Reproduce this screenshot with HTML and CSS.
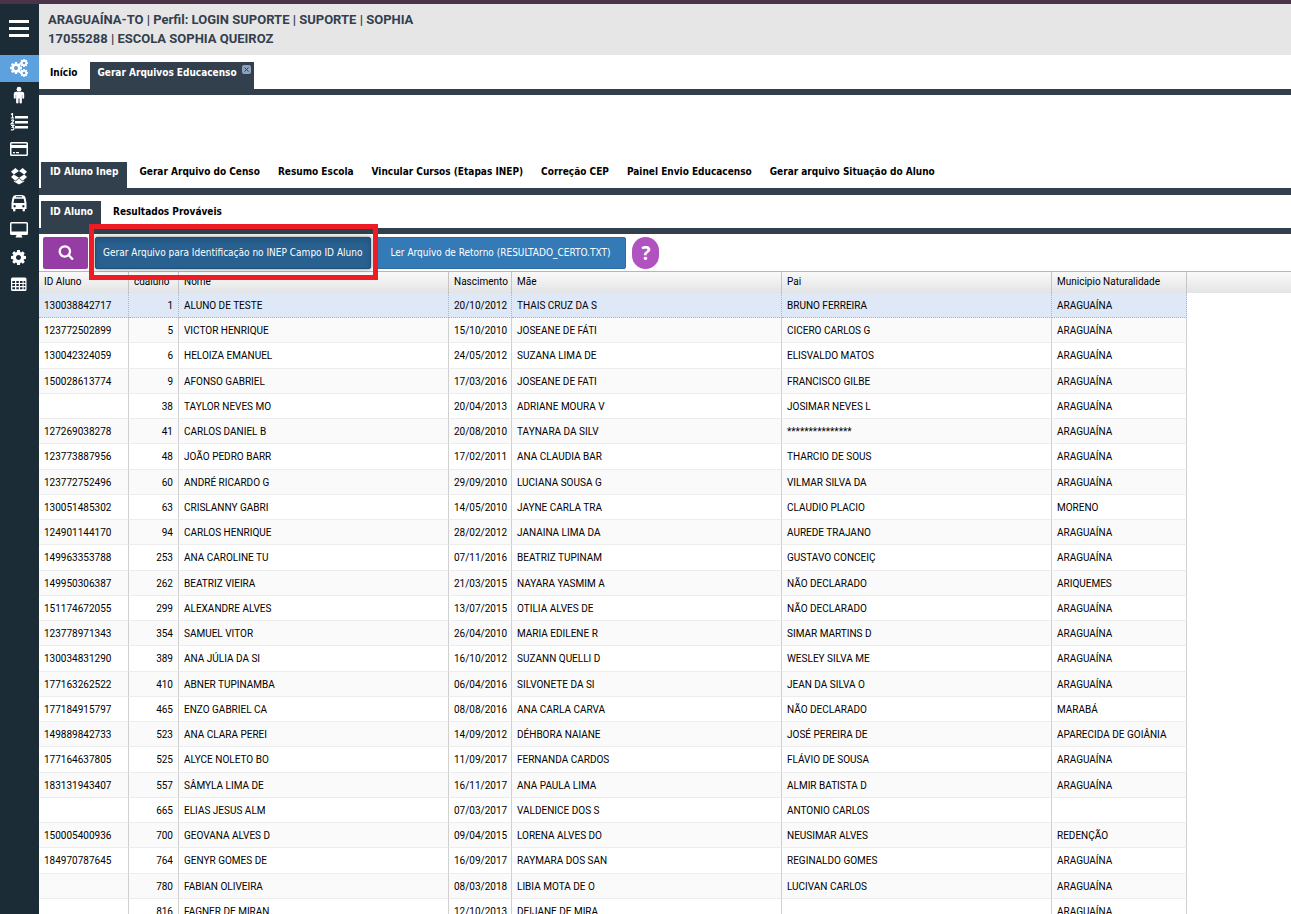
FILE: index.html
```html
<!DOCTYPE html>
<html lang="pt-BR">
<head>
<meta charset="utf-8">
<title>Gerar Arquivos Educacenso</title>
<link rel="stylesheet" href="styles.css">
</head>
<body>
<svg class="defs" aria-hidden="true">
<symbol id="cog" viewBox="128 128 1536 1536"><path d="M1152 896q0-106-75-181t-181-75-181 75-75 181 75 181 181 75 181-75 75-181zm512-109v222q0 12-8 23t-20 13l-185 28q-19 54-39 91 35 50 107 138 10 12 10 25t-9 23q-27 37-99 108t-94 71q-12 0-26-9l-138-108q-44 23-91 38-16 136-29 186-7 28-36 28h-222q-14 0-24.500-8.500t-11.500-21.500l-28-184q-49-16-90-37l-141 107q-10 9-25 9-14 0-25-11-126-114-165-168-7-10-7-23 0-12 8-23 15-21 51-66.500t54-70.500q-27-50-41-99l-183-27q-13-2-21-12.500t-8-23.500v-222q0-12 8-23t19-13l186-28q14-46 39-92-40-57-107-138-10-12-10-24 0-10 9-23 26-36 98.500-107.500t94.500-71.500q13 0 26 10l138 107q44-23 91-38 16-136 29-186 7-28 36-28h222q14 0 24.500 8.500t11.500 21.500l28 184q49 16 90 37l142-107q9-9 24-9 13 0 25 10 129 119 165 170 7 8 7 22 0 12-8 23-15 21-51 66.500t-54 70.500q26 50 41 98l183 28q13 2 21 12.500t8 23.500z"/></symbol>
</svg>
<div class="app">
<nav class="sidebar" aria-label="Menu principal">
<button class="menu" aria-label="Menu"><svg width="20" height="20" viewBox="0 0 20 20"><path d="M0 1h20v3H0zM0 8h20v3H0zM0 15h20v3H0z"/></svg></button>
<a class="item current" href="#" aria-label="Configurações"><svg width="18" height="18" viewBox="0 0 18 18"><use href="#cog" x="0" y="3" width="12" height="12"/><use href="#cog" x="10" y="0" width="8" height="8"/><use href="#cog" x="10" y="10" width="8" height="8"/></svg></a>
<a class="item" href="#" aria-label="Pessoas"><svg width="18" height="18" viewBox="0 0 18 18"><circle cx="9" cy="3.200" r="2.400"/><path d="M6 5.800h6q2.200 0 2.200 2v4q0 1-1 1t-1-1V8.800h-.3V16.500q0 1-1.200 1t-1.200-1V12.500h-1v4q0 1-1.200 1t-1.200-1V8.800h-.3v3q0 1-1 1t-1-1v-4q0-2 2.200-2z"/></svg></a>
<a class="item" href="#" aria-label="Listas"><svg width="18" height="18" viewBox="0 0 18 18"><path d="M5 3h13v2.500H5zM5 8h13v2.500H5zM5 13h13v2.500H5z"/><path class="line" d="M1 1.500l1.500-1v4.500M.8 5h3.400M1.200 7.500q2.700-1.400 2.400.5L1.200 10.800h3M1 12.500h2.800l-1.500 1.700q1.900.2 1.600 1.700-.8 1.600-3 .7"/></svg></a>
<a class="item" href="#" aria-label="Cartões"><svg width="18" height="18" viewBox="0 0 18 18"><path fill-rule="evenodd" d="M1.500 2h15Q18 2 18 3.500v11q0 1.500-1.500 1.500h-15Q0 16 0 14.500v-11Q0 2 1.500 2zm0 1.500V5h15V3.500zm0 4.500v6.500h15V8zM3 12h2v1.300H3zm3 0h3v1.300H6z"/></svg></a>
<a class="item" href="#" aria-label="Módulos"><svg width="18" height="18" viewBox="0 0 18 18"><path d="M5.300 1L9 4.100 3.800 7.400 1 4.800zM12.700 1L17 4.800l-2.800 2.600L9 4.100zM1 9.900l2.800-2.500L9 10.700l-3.700 3zM14.200 7.400l2.800 2.500-4.300 3.800-3.700-3zM9 11.400l3.700 3 1.500-1v1.100L9 17.500l-5.200-3v-1.100l1.500 1z"/></svg></a>
<a class="item" href="#" aria-label="Transporte"><svg width="18" height="18" viewBox="0 0 18 18"><path fill-rule="evenodd" d="M6 1h6q3 .3 3.500 2.500L16.500 9v6H15v1.300q0 1.200-1.200 1.200t-1.300-1.200V15h-7v1.300q0 1.200-1.300 1.200T3 16.300V15H1.500V9l1-5.500Q3 1.300 6 1zm0 1.300v1h6v-1zM4.300 4.800L3.500 9h11L13.700 4.800zM4.600 11a1.200 1.200 0 1 0 .1 0zm8.700 0a1.200 1.200 0 1 0 .1 0z"/></svg></a>
<a class="item" href="#" aria-label="Monitor"><svg width="18" height="18" viewBox="0 0 18 18"><path fill-rule="evenodd" d="M1.500 1h15Q18 1 18 2.500v10q0 1.500-1.500 1.500h-5q0 1 .8 1.500v1H5.700v-1q.8-.5.8-1.500h-5Q0 14 0 12.500v-10Q0 1 1.500 1zm0 1.500v8h15v-8z"/></svg></a>
<a class="item" href="#" aria-label="Ajustes"><svg width="15" height="15"><use href="#cog" width="15" height="15"/></svg></a>
<a class="item" href="#" aria-label="Tabelas"><svg width="18" height="18" viewBox="0 0 18 18"><path fill-rule="evenodd" d="M2.500 2.500h12.500q1.500 0 1.500 1.500v10.500q0 1.500-1.500 1.500h-12.500Q1 16 1 14.500v-10.500Q1 2.500 2.500 2.500zM2.300 6v2H5V6zM6.300 6v2h2.500V6zm3.700 0v2h2.500V6zM13.600 6v2h1.700V6zM2.300 9v2H5V9zm4 0v2h2.500V9zm3.700 0v2h2.500V9zm3.600 0v2h1.700V9zM2.300 12.300v2H5v-2zm4 0v2h2.500v-2zm3.700 0v2h2.500v-2zm3.600 0v2h1.700v-2z"/></svg></a>
</nav>
<main class="main">
<header class="top"><div>ARAGUAÍNA-TO | Perfil: LOGIN SUPORTE | SUPORTE | SOPHIA</div><div>17055288 | ESCOLA SOPHIA QUEIROZ</div></header>
<div class="tabs pages" role="tablist">
<button class="tab" role="tab">Início</button>
<div class="active closable"><button class="tabname" role="tab" aria-selected="true">Gerar Arquivos Educacenso</button><button class="close" aria-label="Fechar"><svg width="9" height="9" viewBox="0 0 9 9"><rect width="9" height="9" rx="2"/><path d="M2.500 2.500l4 4m0-4l-4 4"/></svg></button></div>
</div>
<div class="tabs sections" role="tablist">
<button class="tab active" role="tab" aria-selected="true">ID Aluno Inep</button>
<button class="tab" role="tab">Gerar Arquivo do Censo</button>
<button class="tab" role="tab">Resumo Escola</button>
<button class="tab" role="tab">Vincular Cursos (Etapas INEP)</button>
<button class="tab" role="tab">Correção CEP</button>
<button class="tab" role="tab">Painel Envio Educacenso</button>
<button class="tab" role="tab">Gerar arquivo Situação do Aluno</button>
</div>
<div class="tabs views" role="tablist">
<button class="tab active" role="tab" aria-selected="true">ID Aluno</button>
<button class="tab" role="tab">Resultados Prováveis</button>
</div>
<div class="toolbar">
<button class="btn search" aria-label="Pesquisar"><svg width="16" height="16" viewBox="0 0 1792 1792"><path d="M1216 832q0-185-131.500-316.500t-316.500-131.500-316.500 131.500-131.500 316.500 131.500 316.500 316.500 131.500 316.500-131.500 131.500-316.500zm512 832q0 52-38 90t-90 38q-54 0-90-38l-343-342q-179 124-399 124-143 0-273.500-55.500t-225-150-150-225-55.500-273.500 55.500-273.500 150-225 225-150 273.500-55.500 273.500 55.500 225 150 150 225 55.500 273.500q0 220-124 399l343 343q37 37 37 90z"/></svg></button>
<div class="marked"><button class="btn generate">Gerar Arquivo para Identificação no INEP Campo ID Aluno</button></div>
<button class="btn read">Ler Arquivo de Retorno (RESULTADO_CERTO.TXT)</button>
<button class="help" aria-label="Ajuda">?</button>
</div>
<table class="grid">
<colgroup><col class="w-id"><col class="w-cd"><col class="w-name"><col class="w-date"><col class="w-name"><col class="w-name"><col class="w-city"><col></colgroup>
<thead><tr><th>ID Aluno</th><th>cdaluno</th><th>Nome</th><th>Nascimento</th><th>Mãe</th><th>Pai</th><th>Municipio Naturalidade</th><th></th></tr></thead>
<tbody>
<tr class="selected"><td>130038842717<td>1<td>ALUNO DE TESTE<td>20/10/2012<td>THAIS CRUZ DA S<td>BRUNO FERREIRA<td>ARAGUAÍNA
<tr><td>123772502899<td>5<td>VICTOR HENRIQUE<td>15/10/2010<td>JOSEANE DE FÁTI<td>CICERO CARLOS G<td>ARAGUAÍNA
<tr><td>130042324059<td>6<td>HELOIZA EMANUEL<td>24/05/2012<td>SUZANA LIMA DE<td>ELISVALDO MATOS<td>ARAGUAÍNA
<tr><td>150028613774<td>9<td>AFONSO GABRIEL<td>17/03/2016<td>JOSEANE DE FATI<td>FRANCISCO GILBE<td>ARAGUAÍNA
<tr><td><td>38<td>TAYLOR NEVES MO<td>20/04/2013<td>ADRIANE MOURA V<td>JOSIMAR NEVES L<td>ARAGUAÍNA
<tr><td>127269038278<td>41<td>CARLOS DANIEL B<td>20/08/2010<td>TAYNARA DA SILV<td>***************<td>ARAGUAÍNA
<tr><td>123773887956<td>48<td>JOÃO PEDRO BARR<td>17/02/2011<td>ANA CLAUDIA BAR<td>THARCIO DE SOUS<td>ARAGUAÍNA
<tr><td>123772752496<td>60<td>ANDRÉ RICARDO G<td>29/09/2010<td>LUCIANA SOUSA G<td>VILMAR SILVA DA<td>ARAGUAÍNA
<tr><td>130051485302<td>63<td>CRISLANNY GABRI<td>14/05/2010<td>JAYNE CARLA TRA<td>CLAUDIO PLACIO<td>MORENO
<tr><td>124901144170<td>94<td>CARLOS HENRIQUE<td>28/02/2012<td>JANAINA LIMA DA<td>AUREDE TRAJANO<td>ARAGUAÍNA
<tr><td>149963353788<td>253<td>ANA CAROLINE TU<td>07/11/2016<td>BEATRIZ TUPINAM<td>GUSTAVO CONCEIÇ<td>ARAGUAÍNA
<tr><td>149950306387<td>262<td>BEATRIZ VIEIRA<td>21/03/2015<td>NAYARA YASMIM A<td>NÃO DECLARADO<td>ARIQUEMES
<tr><td>151174672055<td>299<td>ALEXANDRE ALVES<td>13/07/2015<td>OTILIA ALVES DE<td>NÃO DECLARADO<td>ARAGUAÍNA
<tr><td>123778971343<td>354<td>SAMUEL VITOR<td>26/04/2010<td>MARIA EDILENE R<td>SIMAR MARTINS D<td>ARAGUAÍNA
<tr><td>130034831290<td>389<td>ANA JÚLIA DA SI<td>16/10/2012<td>SUZANN QUELLI D<td>WESLEY SILVA ME<td>ARAGUAÍNA
<tr><td>177163262522<td>410<td>ABNER TUPINAMBA<td>06/04/2016<td>SILVONETE DA SI<td>JEAN DA SILVA O<td>ARAGUAÍNA
<tr><td>177184915797<td>465<td>ENZO GABRIEL CA<td>08/08/2016<td>ANA CARLA CARVA<td>NÃO DECLARADO<td>MARABÁ
<tr><td>149889842733<td>523<td>ANA CLARA PEREI<td>14/09/2012<td>DÉHBORA NAIANE<td>JOSÉ PEREIRA DE<td>APARECIDA DE GOIÂNIA
<tr><td>177164637805<td>525<td>ALYCE NOLETO BO<td>11/09/2017<td>FERNANDA CARDOS<td>FLÁVIO DE SOUSA<td>ARAGUAÍNA
<tr><td>183131943407<td>557<td>SÂMYLA LIMA DE<td>16/11/2017<td>ANA PAULA LIMA<td>ALMIR BATISTA D<td>ARAGUAÍNA
<tr><td><td>665<td>ELIAS JESUS ALM<td>07/03/2017<td>VALDENICE DOS S<td>ANTONIO CARLOS<td>
<tr><td>150005400936<td>700<td>GEOVANA ALVES D<td>09/04/2015<td>LORENA ALVES DO<td>NEUSIMAR ALVES<td>REDENÇÃO
<tr><td>184970787645<td>764<td>GENYR GOMES DE<td>16/09/2017<td>RAYMARA DOS SAN<td>REGINALDO GOMES<td>ARAGUAÍNA
<tr><td><td>780<td>FABIAN OLIVEIRA<td>08/03/2018<td>LIBIA MOTA DE O<td>LUCIVAN CARLOS<td>ARAGUAÍNA
<tr><td><td>816<td>FAGNER DE MIRAN<td>12/10/2013<td>DEIJANE DE MIRA<td><td>ARAGUAÍNA
</tbody>
</table>
</main>
</div>
</body>
</html>
```

FILE: styles.css
```css
* { box-sizing: border-box; }
body {
  margin: 0;
  height: 100vh;
  overflow: hidden;
  background: #fff;
  color: #000;
  font-family: "DejaVu Sans Condensed", "DejaVu Sans", Tahoma, sans-serif;
  font-size: 10px;
}
button { font: inherit; border: 0; margin: 0; padding: 0; background: none; color: inherit; white-space: nowrap; }
.defs { position: absolute; width: 0; height: 0; }
.app { display: flex; height: 100%; border-top: 4px solid #4b3447; }

.sidebar { flex: none; display: flex; flex-direction: column; width: 39px; background: #1c2c37; fill: #fff; }
.menu { display: grid; place-items: center; height: 51px; padding: 0 1px 1px 0; }
.item { display: grid; place-items: center; height: 27px; padding: 0 2px 1px 0; }
.current { background: #5ea1df; }
.line { fill: none; stroke: #fff; stroke-width: 1.2; }

.main { flex: 1; min-width: 0; }
.top { height: 51px; padding: 6px 9px; background: #e6e6e6; color: #323f4e; font: bold 13px/19px Roboto, "Noto Sans", sans-serif; }

.tabs { display: flex; align-items: stretch; gap: 2px; padding-left: 2px; border-bottom: 6px solid #323f4d; font-weight: bold; }
.tab { padding: 0 8px 6px; }
.active { background: #323f4d; color: #fff; }
.tab.active { margin-right: 2px; padding: 0 9px 6px; }
.pages { height: 40px; padding: 7px 0 0 3px; gap: 5px; }
.closable { display: flex; padding: 0 3px 0 7px; gap: 5px; }
.tabname { padding-bottom: 6px; }
.close { align-self: flex-start; padding-top: 3px; line-height: 0; }
.close rect { fill: #8ea2bf; }
.close path { stroke: #323f4d; stroke-width: 1; }
.sections { height: 100px; padding-top: 67px; border-bottom-width: 7px; }
.sections .tab { padding-bottom: 8px; }
.views { height: 39px; padding-top: 6px; }
.views .tab.active { padding-right: 8px; }

.toolbar { display: flex; align-items: center; height: 37px; padding: 0 4px; }
.btn { height: 32px; border-radius: 2px; color: #fff; }
.search { width: 45px; margin-right: 7px; background: #963da5; fill: #fff; }
.marked { position: relative; margin-right: 4px; }
.marked::after { content: ""; position: absolute; inset: -13px -7px -11px -6px; border: 5px solid #ed1c24; pointer-events: none; }
.generate { padding: 0 8px 0 7px; border: 1px solid #204d74; background: #286090; box-shadow: inset 0 3px 5px rgba(0, 0, 0, .125), 0 0 4px rgba(0, 0, 0, .5); }
.read { padding: 0 15px 0 14px; border: 1px solid #2e6da4; background: #337ab7; margin-right: 6px; }
.help { width: 27px; height: 32px; border-radius: 14px; background: #b052c0; color: #fff; font: bold 19px "Open Sans", sans-serif; }

.grid { width: 100%; table-layout: fixed; border-collapse: separate; border-spacing: 0; font-family: Roboto, "Noto Sans", sans-serif; }
.w-id { width: 90px; }
.w-cd { width: 50px; }
.w-name { width: 270px; }
.w-date { width: 63px; }
.w-city { width: 135px; }
.grid th, .grid td { padding: 0 5px; text-align: left; white-space: nowrap; }
.grid th { height: 22px; padding-bottom: 2px; font-weight: normal; border-top: 1px solid #99bbe8; border-right: 1px solid #c5c5c5; background: linear-gradient(#f9f9f9, #e3e4e6); }
.grid th:last-child { border-right: 0; }
.grid td { height: 25px; border-right: 1px solid #d0d0d0; border-bottom: 1px solid #ededed; }
.grid tbody tr:nth-child(4n+3) td { height: 26px; }
.grid tbody tr:nth-child(even) td { background: #fafafa; }
.grid td:nth-child(2) { text-align: right; }
.grid .selected td { background: #dfe8f6; border-right: 1px dotted #99b4e9; border-bottom: 1px dotted #99b4e9; }
```
